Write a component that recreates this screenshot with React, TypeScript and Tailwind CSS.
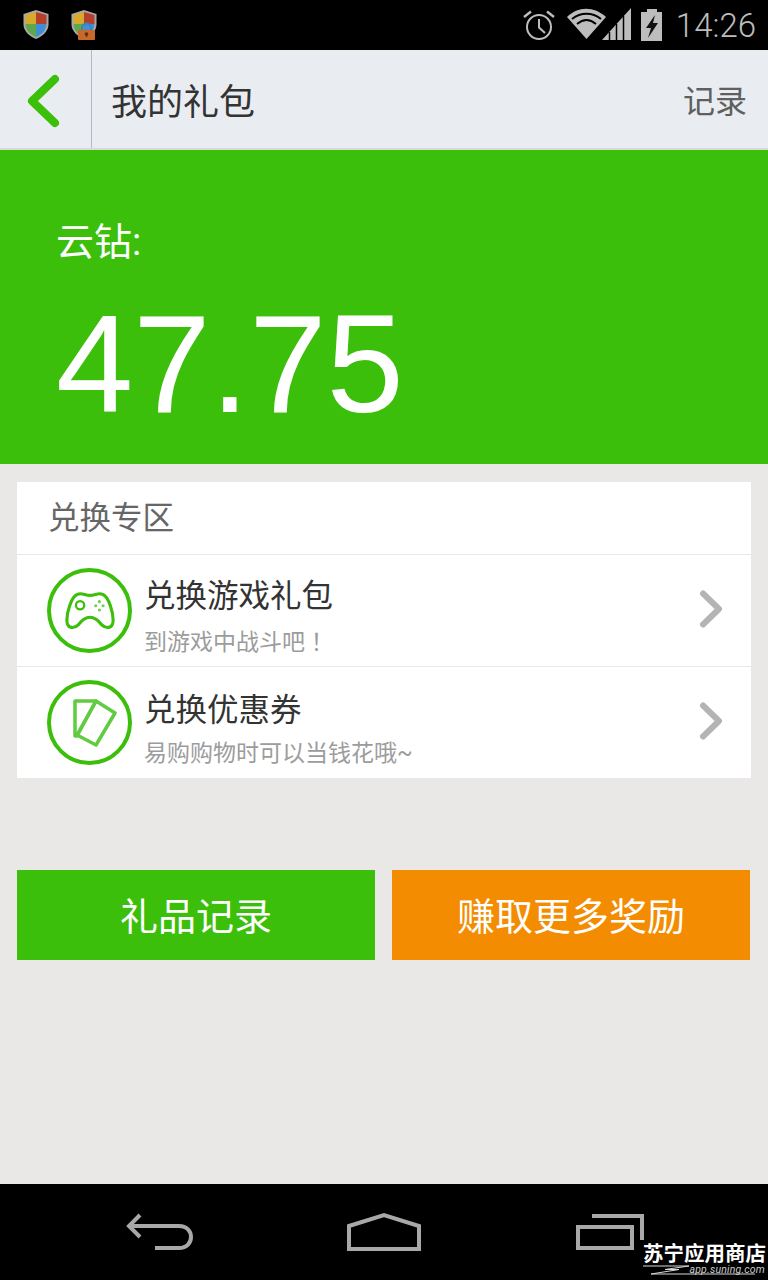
const CJK = "font-['Roboto','Noto_Sans_CJK_SC',sans-serif]";

function Shield({ lock }: { lock?: boolean }) {
  return (
    <svg width="30" height="32" viewBox="0 0 30 32">
      <path d="M15 1 L27.500 5 V16 C27 23 21 27.500 15 30 C9 27.500 3 23 2.500 16 V5 Z" fill="#a8a8a8" />
      <path d="M15 3 V15 H4.500 V6 Z" fill="#d9a92c" />
      <path d="M15 3 L25.500 6 V15 H15 Z" fill="#b5402a" />
      <path d="M4.500 15 H15 V28 C10 26 5 22 4.500 15 Z" fill="#5ca84a" />
      <path d="M15 15 H25.500 C25 22 20 26 15 28 Z" fill="#3f8fd6" />
      {lock && (
        <g>
          <path d="M13 22 V19 C13 13 22 13 22 19 V22" fill="none" stroke="#3f7fc4" strokeWidth="2" />
          <rect x="9" y="21" width="17" height="10" rx="1" fill="#c8682a" />
          <circle cx="17.500" cy="25" r="1.800" fill="#5e2f10" />
          <rect x="16.800" y="25" width="1.400" height="3" fill="#5e2f10" />
        </g>
      )}
    </svg>
  );
}

function StatusIcons() {
  return (
    <div className="flex items-center">
      <svg width="34" height="32" viewBox="0 0 34 32" className="mr-[11px]">
        <circle cx="17" cy="18" r="12" fill="none" stroke="#bdbdbd" strokeWidth="2" />
        <path d="M17 10 V18.500 L23 24" fill="none" stroke="#bdbdbd" strokeWidth="2" />
        <path d="M2 8 L9 2.500 M32 8 L25 2.500" fill="none" stroke="#bdbdbd" strokeWidth="2.400" />
      </svg>
      <svg width="65" height="34" viewBox="0 0 65 34" className="mr-[9px]">
        <path d="M0 9 C11 -2 27 -2 39 9 L19.500 31 Z" fill="#bdbdbd" />
        <path d="M5 11 C14 4 25 4 34 11 M10 16 C16 11 23 11 29 16" fill="none" stroke="#000" strokeWidth="2" />
        <path d="M35 32 L64 0 V32 Z" fill="#bdbdbd" />
        <path d="M42.500 32 V24 M49.500 32 V16 M56.500 32 V8" stroke="#000" strokeWidth="1.500" />
      </svg>
      <svg width="22" height="32" viewBox="0 0 22 32" className="mr-[13px]">
        <rect x="6" y="0" width="10" height="4" fill="#bdbdbd" />
        <rect x="0" y="3" width="21" height="29" fill="#bdbdbd" />
        <path d="M14 6 L5 19 H10 L7 29 L17 14 H12 Z" fill="#111" />
      </svg>
    </div>
  );
}

function GamepadIcon() {
  return (
    <svg width="50" height="40" viewBox="0 0 48 38" fill="none" stroke="#3bbf0b">
      <path
        d="M12 3 C16 1 19 4 24 4 C29 4 32 1 36 3 C42 5 47 22 46 30 C45 36 39 36 35 32 C32 28 28 25 24 25 C20 25 16 28 13 32 C9 36 3 36 2 30 C1 22 6 5 12 3 Z"
        strokeWidth="3"
      />
      <circle cx="14.500" cy="13.500" r="4" strokeWidth="2.200" />
      <g fill="#6fd04e" stroke="none">
        <circle cx="33" cy="10" r="1.500" />
        <circle cx="33" cy="18" r="1.500" />
        <circle cx="29.500" cy="14" r="1.500" />
        <circle cx="36.500" cy="14" r="1.500" />
      </g>
    </svg>
  );
}

function CardsIcon() {
  return (
    <svg width="46" height="48" viewBox="0 0 46 48" fill="none" stroke="#62cc40" strokeWidth="3.500" strokeLinejoin="round" className="ml-[10px]">
      <path d="M3 2 H24 L5 37 L3 37 Z" />
      <path d="M24 2 L43 14 L24 46 L5 36 Z" />
    </svg>
  );
}

function Chevron() {
  return (
    <svg width="24" height="38" viewBox="0 0 24 38" fill="none" stroke="#b4b4b4" strokeWidth="6" strokeLinecap="round" strokeLinejoin="round" className="-mt-[4px]">
      <path d="M4 3.500 L20 19 L4 34.500" />
    </svg>
  );
}

function ExchangeRow({
  icon,
  title,
  subtitle,
}: {
  icon: React.ReactNode;
  title: React.ReactNode;
  subtitle: React.ReactNode;
}) {
  return (
    <div className="flex h-[112px] items-center border-t border-[#e8e8e8]">
      <div className="ml-[30px] flex h-[85px] w-[85px] shrink-0 items-center justify-center rounded-full border-[4px] border-[#3bbf0b]">
        {icon}
      </div>
      <div className="ml-[13px] flex-1 pt-[14px]">
        <div className="-ml-[1px] text-[31.500px] leading-[40px] text-[#333]">{title}</div>
        <div className="-ml-[1px] mt-[8px] text-[23px] leading-[30px] text-[#9c9c9c]">{subtitle}</div>
      </div>
      <div className="mr-[28px]">
        <Chevron />
      </div>
    </div>
  );
}

export default function App() {
  return (
    <div className={`${CJK} flex h-[1280px] w-[768px] flex-col overflow-hidden bg-[#e9e8e6]`}>
      <div className="flex h-[50px] items-center bg-black">
        <div className="ml-[21px] flex gap-[18px]">
          <Shield />
          <Shield lock />
        </div>
        <div className="ml-auto flex items-center">
          <StatusIcons />
          <span className="mr-[12px] font-['Roboto',sans-serif] text-[33px] leading-none font-light text-[#bdbdbd]">14:26</span>
        </div>
      </div>

      <div className="flex h-[100px] items-stretch border-b-2 border-[#d9d9d9] bg-[#e9edf1]">
        <div className="flex w-[92px] items-center justify-center border-r border-[#b4bac3]">
          <svg width="36" height="54" viewBox="0 0 36 54" fill="none" stroke="#3bbf0b" strokeWidth="8" strokeLinecap="round" strokeLinejoin="round" className="mt-[3px] mr-[3px]">
            <path d="M29 5 L6 27 L29 49" />
          </svg>
        </div>
        <div className="ml-[19px] flex items-center pt-[7px] text-[36px] text-[#333]">我的礼包</div>
        <div className="mr-[21px] ml-auto flex items-center pt-[5px] text-[32px] text-[#5f5f5f]">记录</div>
      </div>

      <div className="h-[314px] bg-[#3bbf0b] pl-[56px] text-white">
        <div className="pt-[67px] text-[38px] leading-[50px]">云钻:</div>
        <div className="mt-[32px] font-['Liberation_Sans',sans-serif] text-[139px] leading-[130px]">47.75</div>
      </div>

      <div className="mx-[17px] mt-[18px] bg-white">
        <div className="flex h-[72px] items-center pt-[2px] pl-[31px] text-[31.500px] text-[#666]">兑换专区</div>
        <ExchangeRow
          icon={<GamepadIcon />}
          title="兑换游戏礼包"
          subtitle={
            <>
              到游戏中战斗吧<span className="font-['Noto_Sans_CJK_TC',sans-serif]">！</span>
            </>
          }
        />
        <ExchangeRow icon={<CardsIcon />} title="兑换优惠券" subtitle="易购购物时可以当钱花哦~" />
      </div>

      <div className="mt-[92px] flex gap-[17px] px-[17px]">
        <div className="flex h-[90px] w-[358px] items-center justify-center bg-[#3bbf0b] pt-[4px] text-[38px] text-white">礼品记录</div>
        <div className="flex h-[90px] w-[358px] items-center justify-center bg-[#f38c00] pt-[4px] text-[38px] text-white">赚取更多奖励</div>
      </div>

      <div className="relative mt-auto flex h-[96px] items-center bg-black">
        <svg width="68" height="38" viewBox="0 0 68 38" fill="none" stroke="#a8a8a8" strokeWidth="4" className="ml-[125px]">
          <path d="M15 2 L4 13 L15 24" />
          <path d="M4 13 H54 C70 13 70 35 54 35 H30" />
        </svg>
        <svg width="74" height="40" viewBox="0 0 74 40" fill="none" stroke="#a8a8a8" strokeWidth="4" className="ml-[154px]">
          <path d="M2 14 L37 3 L72 14 V37 H2 Z" />
        </svg>
        <svg width="70" height="36" viewBox="0 0 70 36" fill="none" stroke="#a8a8a8" strokeWidth="4" className="ml-[155px]">
          <rect x="2" y="13" width="54" height="21" />
          <path d="M16 2 H66 V26" />
        </svg>
        <div className="absolute right-[2px] bottom-[6px] text-right text-white">
          <div className="text-[20.500px] leading-[20px] font-bold">苏宁应用商店</div>
          <div className="relative h-[10px]">
            <svg width="124" height="10" viewBox="0 0 124 10" className="absolute left-0 top-[1px]">
              <path d="M0 1 H46 L22 4.500 H36 L8 9 H112" fill="none" stroke="#d8d8d8" strokeWidth="1" />
            </svg>
            <span className="absolute right-[1px] top-[1px] text-[10.500px] leading-[9px] tracking-[0.200px] text-[#ccc] italic">app.suning.com</span>
          </div>
        </div>
      </div>
    </div>
  );
}
